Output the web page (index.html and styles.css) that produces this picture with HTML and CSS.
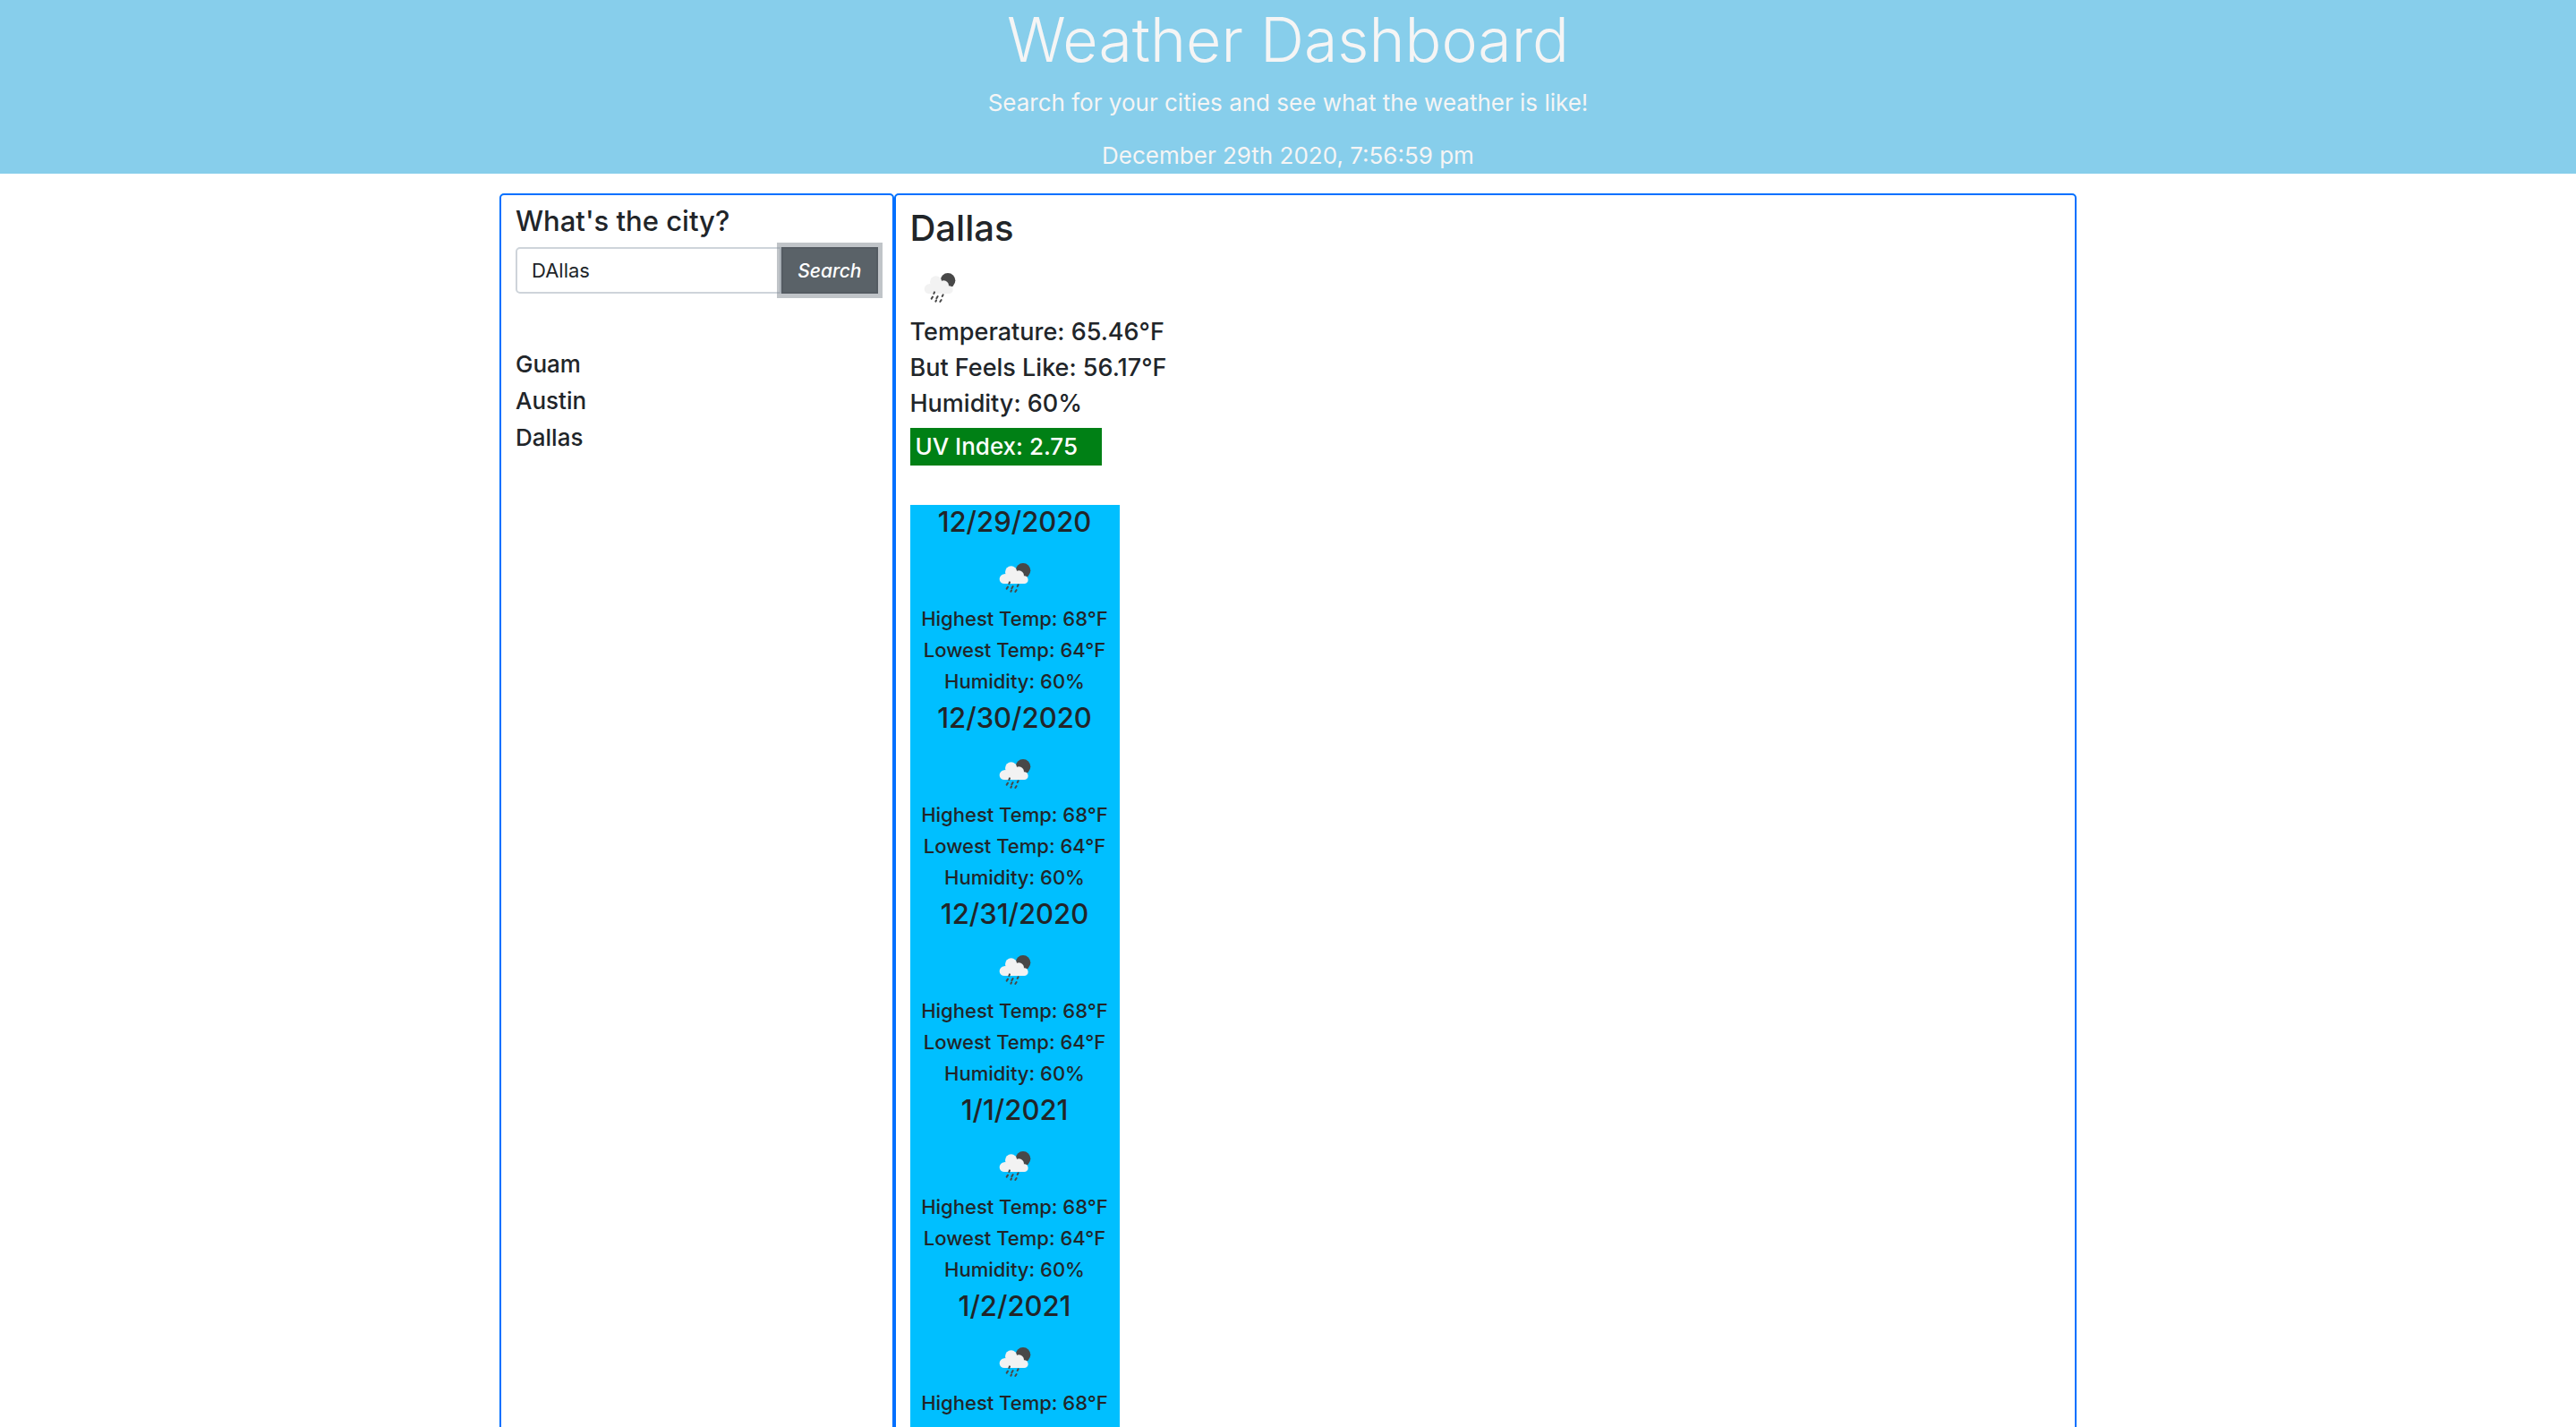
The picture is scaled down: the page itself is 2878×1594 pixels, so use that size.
FILE: index.html
```html
<!DOCTYPE html>
<html lang="en">
<head>
<meta charset="utf-8">
<meta name="viewport" content="width=device-width, initial-scale=1">
<title>Weather Dashboard</title>
<link rel="stylesheet" href="styles.css">
</head>
<body>
<svg class="sprite" aria-hidden="true">
  <symbol id="rain" viewBox="45 39 108 105">
    <circle cx="126" cy="67" r="25" fill="#484848"/>
    <g fill="#f2f2f2">
      <circle cx="63" cy="95" r="16"/>
      <circle cx="86" cy="72" r="20"/>
      <circle cx="112" cy="84" r="17"/>
      <circle cx="130" cy="98" r="13"/>
      <path d="M63 79h50l17 10v22H63z"/>
    </g>
    <path d="M81 106l-2 5M75 122l-4 6M92 120l-4 7M110 115l-3 5M87 134l-2 3M104 132l-4 6" fill="none" stroke="#484848" stroke-width="6" stroke-linecap="round"/>
  </symbol>
</svg>
<header class="banner">
  <h1 class="banner-title">Weather Dashboard</h1>
  <p class="lead">Search for your cities and see what the weather is like!</p>
  <p class="lead">December 29th 2020, 7:56:59 pm</p>
</header>
<main class="board">
  <section class="panel">
    <form class="search">
      <label class="search-label" for="city">What's the city?</label>
      <div class="search-row">
        <input class="search-input" id="city" type="text" value="DAllas">
        <button class="search-button" type="button">Search</button>
      </div>
    </form>
    <ul class="cities">
      <li>Guam</li>
      <li>Austin</li>
      <li>Dallas</li>
    </ul>
  </section>
  <section class="panel">
    <h2 class="city-name">Dallas</h2>
    <div class="current-icon"><svg class="icon" role="img" aria-label="Rain"><use href="#rain"/></svg></div>
    <p class="stat">Temperature: 65.46°F</p>
    <p class="stat">But Feels Like: 56.17°F</p>
    <p class="stat">Humidity: 60%</p>
    <p class="uv">UV Index: 2.75</p>
    <div class="forecast">
      <article class="day">
        <h3 class="day-date">12/29/2020</h3>
        <div class="day-icon"><svg class="icon" role="img" aria-label="Rain"><use href="#rain"/></svg></div>
        <p>Highest Temp: 68°F</p>
        <p>Lowest Temp: 64°F</p>
        <p>Humidity: 60%</p>
      </article>
      <article class="day">
        <h3 class="day-date">12/30/2020</h3>
        <div class="day-icon"><svg class="icon" role="img" aria-label="Rain"><use href="#rain"/></svg></div>
        <p>Highest Temp: 68°F</p>
        <p>Lowest Temp: 64°F</p>
        <p>Humidity: 60%</p>
      </article>
      <article class="day">
        <h3 class="day-date">12/31/2020</h3>
        <div class="day-icon"><svg class="icon" role="img" aria-label="Rain"><use href="#rain"/></svg></div>
        <p>Highest Temp: 68°F</p>
        <p>Lowest Temp: 64°F</p>
        <p>Humidity: 60%</p>
      </article>
      <article class="day">
        <h3 class="day-date">1/1/2021</h3>
        <div class="day-icon"><svg class="icon" role="img" aria-label="Rain"><use href="#rain"/></svg></div>
        <p>Highest Temp: 68°F</p>
        <p>Lowest Temp: 64°F</p>
        <p>Humidity: 60%</p>
      </article>
      <article class="day">
        <h3 class="day-date">1/2/2021</h3>
        <div class="day-icon"><svg class="icon" role="img" aria-label="Rain"><use href="#rain"/></svg></div>
        <p>Highest Temp: 68°F</p>
        <p>Lowest Temp: 64°F</p>
        <p>Humidity: 60%</p>
      </article>
    </div>
  </section>
</main>
</body>
</html>
```
FILE: styles.css
```css
*,
*::before,
*::after {
  box-sizing: border-box;
}

body {
  margin: 0;
  background: #fff;
  color: #212529;
  font-family: Inter, "Liberation Sans", sans-serif;
  font-size: 22px;
  font-weight: 500;
}

h1,
h2,
h3,
p,
ul {
  margin: 0;
  padding: 0;
  font-weight: inherit;
}

.sprite {
  display: none;
}

.banner {
  display: flex;
  flex-direction: column;
  align-items: center;
  background: #87ceeb;
  color: #f5f5f5;
  text-align: center;
  font-weight: 400;
}

.banner-title {
  margin-bottom: 7px;
  font-size: 68px;
  font-weight: 300;
  line-height: 88px;
}

.lead {
  font-size: 26px;
  line-height: 40px;
}

.lead + .lead {
  margin-top: 19px;
}

.board {
  display: grid;
  grid-template-columns: minmax(0, 1fr) minmax(0, 3fr);
  max-width: 1762px;
  margin: 22px auto 0;
}

.panel {
  padding: 10px 16px;
  border: 2px solid #0070ff;
  border-radius: 5px;
}

.search-label {
  display: block;
  margin-bottom: 10px;
  font-size: 31px;
  line-height: 38px;
}

.search-row {
  display: flex;
  height: 52px;
}

.search-input {
  flex: 1;
  min-width: 0;
  padding: 0 16px;
  border: 2px solid #ced4da;
  border-radius: 5px 0 0 5px;
  background: #fff;
  color: #212529;
  font: 400 22px Inter, "Liberation Sans", sans-serif;
}

.search-button {
  position: relative;
  padding: 0 16px;
  border: 2px solid #545b62;
  border-radius: 0;
  background: #5a6268;
  box-shadow: 0 0 0 5px rgba(130, 138, 145, 0.5);
  color: #fff;
  font: italic 500 21px Inter, "Liberation Sans", sans-serif;
}

.cities {
  margin-top: 58px;
  font-size: 26px;
  line-height: 41px;
  list-style: none;
}

.city-name {
  font-size: 40px;
  line-height: 54px;
}

.icon {
  display: block;
  width: 36px;
  height: 35px;
}

.current-icon {
  height: 69px;
  padding: 22px 15px 0;
}

.stat {
  font-size: 27px;
  line-height: 40px;
}

.uv {
  width: 214px;
  margin: 7px 0 44px;
  padding: 0 6px;
  background: #008015;
  color: #fff;
  font-size: 26px;
  line-height: 42px;
}

.forecast {
  width: 234px;
  background: #00bfff;
  text-align: center;
  font-size: 22px;
  line-height: 35px;
}

.day {
  padding-bottom: 4px;
}

.day-date {
  font-size: 31px;
  line-height: 38px;
}

.day-icon {
  display: flex;
  justify-content: center;
  height: 72px;
  padding-top: 26px;
}
```
